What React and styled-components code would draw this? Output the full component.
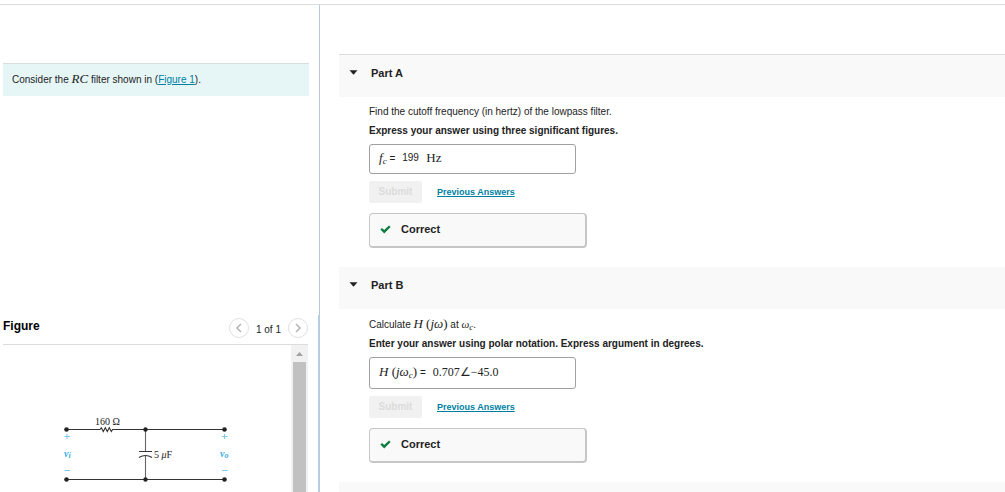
import React from "react";
import styled, { createGlobalStyle } from "styled-components";

const GlobalStyle = createGlobalStyle`
  * { box-sizing: border-box; }
  body {
    margin: 0;
    background: #fff;
    color: #222;
    font-family: "Liberation Sans", Arial, sans-serif;
    font-size: 10px;
    line-height: 16px;
  }
`;

const Page = styled.div`
  height: 100vh;
  padding-top: 4px;
  display: flex;
  flex-direction: column;
  overflow: hidden;
`;

const Columns = styled.div`
  flex: 1;
  min-height: 0;
  display: grid;
  grid-template-columns: 320px minmax(0, 1fr);
  border-top: 1px solid #dcdcdc;
`;

const Sidebar = styled.aside`
  display: flex;
  flex-direction: column;
  min-height: 0;
`;

const Introduction = styled.section`
  flex: 0 0 310px;
  padding: 58px 10px 0 3px;
  border-right: 1px solid #b9c6dc;
`;

const Prompt = styled.div`
  height: 33px;
  padding: 0 9px 2px;
  display: flex;
  align-items: center;
  border-top: 1px solid #d5dddd;
  background: #e6f6f6;
`;

const Link = styled.a`
  color: #007fa3;
  text-decoration: underline;
  font-size: ${(p) => (p.$bold ? 9 : 10)}px;
  font-weight: ${(p) => (p.$bold ? 700 : 400)};
`;

const MathText = styled.span`
  font-family: "Liberation Serif", "Times New Roman", serif;
  font-size: ${(p) => (p.$small ? 11 : 13)}px;
  line-height: 16px;
  font-style: ${(p) => (p.$upright ? "normal" : "italic")};
  white-space: nowrap;

  sub {
    font-size: 9px;
    line-height: 0;
    vertical-align: -2px;
  }
`;

const Upright = styled.span`
  font-style: normal;
`;

const FigurePane = styled.section`
  flex: 1;
  min-height: 0;
  padding: 0 10px 0 3px;
  border-right: 2px solid #b9cbe0;
  display: flex;
  flex-direction: column;
`;

const FigureHeader = styled.header`
  flex: 0 0 30px;
  display: flex;
  justify-content: space-between;
  border-bottom: 1px solid #dcdcdc;
`;

const FigureTitle = styled.h2`
  margin: 2px 0 0;
  color: #000;
  font-size: 12px;
  line-height: 18px;
`;

const Pager = styled.nav`
  padding-top: 3px;
  display: flex;
  align-items: flex-start;
  gap: 7px;
  line-height: 24px;
`;

const RoundButton = styled.button`
  width: 20px;
  height: 20px;
  padding: 0;
  display: grid;
  place-items: center;
  border: 1px solid #e0e0e0;
  border-radius: 50%;
  background: #fff;
`;

const FigureView = styled.div`
  flex: 1;
  min-height: 0;
  display: flex;
  overflow: hidden;
`;

const Drawing = styled.div`
  flex: 1;
  overflow: hidden;

  svg { display: block; }
  text { font-family: "Liberation Serif", "Times New Roman", serif; }
`;

const ScrollTrack = styled.div`
  width: 17px;
  background: #f1f1f1;
  display: flex;
  flex-direction: column;
  align-items: center;
`;

const ScrollArrow = styled.div`
  flex: 0 0 17px;
  display: grid;
  place-items: center;
`;

const ScrollThumb = styled.div`
  flex: 1;
  width: 13px;
  background: #c1c1c1;
`;

const Content = styled.main`
  padding: 49px 0 0 19px;
  overflow: hidden;
`;

const PartHeader = styled.header`
  height: ${(p) => (p.$first ? 43 : 42)}px;
  padding: 9px 10px 0;
  display: flex;
  align-items: flex-start;
  gap: 13px;
  border-top: ${(p) => (p.$first ? "1px solid #dcdcdc" : "0")};
  background: #f9f9f9;
`;

const Toggle = styled.button`
  width: 9px;
  height: 16px;
  padding: 0;
  border: 0;
  background: none;
  display: grid;
  place-items: center;
`;

const PartTitle = styled.h2`
  margin: 0;
  font-size: 11px;
  line-height: 18px;
  font-weight: 700;
`;

const PartBody = styled.form`
  padding: 7px 16px 19px 30px;
`;

const Question = styled.p`
  margin: 0 0 3px;
`;

const Instruction = styled.p`
  margin: 0 0 5px;
  font-weight: 700;
`;

const AnswerBox = styled.div`
  width: 207px;
  max-width: 100%;
  height: ${(p) => (p.$tall ? 32 : 30)}px;
  padding: 0 9px 2px;
  display: flex;
  align-items: center;
  gap: 7px;
  border: 1px solid #a0a0a0;
  border-radius: 3px;

  label { white-space: nowrap; }
`;

const AnswerInput = styled.input`
  width: ${(p) => (p.$math ? 90 : 17)}px;
  padding: 0;
  border: 0;
  outline: 0;
  background: transparent;
  color: #222;
  font-family: ${(p) => (p.$math ? '"Liberation Serif", serif' : '"Liberation Sans", sans-serif')};
  font-size: ${(p) => (p.$math ? 12 : 10)}px;
  line-height: 16px;
`;

const Actions = styled.div`
  margin: 7px 0 10px;
  display: flex;
  align-items: center;
  gap: 15px;
`;

const SubmitButton = styled.button`
  width: 53px;
  height: 22px;
  padding: 0;
  border: 0;
  border-radius: 2px;
  background: #f1f1f1;
  color: #dcdcdc;
  font: 700 10px/22px "Liberation Sans", Arial, sans-serif;
`;

const Feedback = styled.div`
  width: 218px;
  max-width: 100%;
  height: 35px;
  padding: 0 10px 2px;
  display: flex;
  align-items: center;
  gap: 10px;
  border: solid #c6c6c6;
  border-width: 1px 2px 2px 1px;
  border-radius: 4px;
  background: #f9f9f9;
  font-size: 11px;
  font-weight: 700;
`;

function Chevron({ right }) {
  return (
    <svg width="8" height="10" viewBox="0 0 8 10" aria-hidden="true">
      <path d={right ? "M2 1 6 5 2 9" : "M6 1 2 5 6 9"} fill="none" stroke="#b5b5b5" strokeWidth="1.6" />
    </svg>
  );
}

function Check() {
  return (
    <svg width="11" height="9" viewBox="0 0 11 9" aria-hidden="true">
      <path d="M0.4 4.6 2 3.1 4.2 5.1 9 0.4 10.6 1.9 4.2 8.4Z" fill="#0a7d3c" />
    </svg>
  );
}

function Circuit() {
  return (
    <svg width="280" height="160" viewBox="3 345 280 160" role="img" aria-label="RC filter circuit">
      <g fill="none" stroke="#333" strokeWidth="1.1">
        <path d="M66.5 429.5H100l1.3-1.8 2 3.8 2-3.8 2 3.8 2-3.8 2 3.8 1.4-2H224.5" />
        <path d="M66.5 479.5H224.5" />
        <path d="M145.5 429.5V451.5M145.5 455.5V479.5" stroke="#666" />
        <path d="M139 451.5H152M139 457.5Q145.5 453.5 152 457.5" />
      </g>
      <g fill="#222">
        <circle cx="66.5" cy="429.5" r="2.3" />
        <circle cx="145.5" cy="429.5" r="2.2" />
        <circle cx="224.5" cy="429.5" r="2.3" />
        <circle cx="66.5" cy="479.5" r="2.3" />
        <circle cx="145.5" cy="479.5" r="2.2" />
        <circle cx="224.5" cy="479.5" r="2.3" />
        <text x="95" y="425" fontSize="10">160 Ω</text>
        <text x="154" y="458" fontSize="10">5 <tspan fontStyle="italic">μ</tspan>F</text>
      </g>
      <path
        d="M64.5 436.5H70M67 434V439M222 436.5H227.5M224.5 434V439M64.5 470.5H70M222 470.5H227.5"
        stroke="#79c9f0"
        fill="none"
      />
      <g fill="#35aee8" fontStyle="italic" fontWeight="700" fontSize="10">
        <text x="64" y="457">v<tspan fontSize="8" dy="1">i</tspan></text>
        <text x="220" y="457">v<tspan fontSize="8" dy="1">o</tspan></text>
      </g>
    </svg>
  );
}

function Part({ first, title, question, instruction, label, id, value, math }) {
  return (
    <section>
      <PartHeader $first={first}>
        <Toggle type="button" aria-label={`Collapse ${title}`}>
          <svg width="9" height="5" viewBox="0 0 9 5" aria-hidden="true">
            <path d="M0.5 0.3H8.5L4.5 4.7Z" fill="#222" />
          </svg>
        </Toggle>
        <PartTitle>{title}</PartTitle>
      </PartHeader>
      <PartBody onSubmit={(e) => e.preventDefault()}>
        <Question>{question}</Question>
        <Instruction>{instruction}</Instruction>
        <AnswerBox $tall={math}>
          <label htmlFor={id}>{label} =</label>
          <AnswerInput id={id} $math={math} defaultValue={value} readOnly />
          {!math && <MathText $upright>Hz</MathText>}
        </AnswerBox>
        <Actions>
          <SubmitButton type="submit" disabled>Submit</SubmitButton>
          <Link href="#previous" $bold>Previous Answers</Link>
        </Actions>
        <Feedback><Check />Correct</Feedback>
      </PartBody>
    </section>
  );
}

export default function App() {
  return (
    <>
      <GlobalStyle />
      <Page>
        <Columns>
          <Sidebar>
            <Introduction>
              <Prompt>
                <span>
                  Consider the <MathText>RC</MathText> filter shown in (<Link href="#figure">Figure 1</Link>).
                </span>
              </Prompt>
            </Introduction>
            <FigurePane id="figure">
              <FigureHeader>
                <FigureTitle>Figure</FigureTitle>
                <Pager aria-label="Figures">
                  <RoundButton type="button" aria-label="Previous figure"><Chevron /></RoundButton>
                  <span>1 of 1</span>
                  <RoundButton type="button" aria-label="Next figure"><Chevron right /></RoundButton>
                </Pager>
              </FigureHeader>
              <FigureView>
                <Drawing><Circuit /></Drawing>
                <ScrollTrack>
                  <ScrollArrow>
                    <svg width="7" height="4" viewBox="0 0 7 4" aria-hidden="true">
                      <path d="M0 4 3.5 0 7 4Z" fill="#a3a3a3" />
                    </svg>
                  </ScrollArrow>
                  <ScrollThumb />
                </ScrollTrack>
              </FigureView>
            </FigurePane>
          </Sidebar>
          <Content>
            <Part
              first
              id="cutoff"
              title="Part A"
              question="Find the cutoff frequency (in hertz) of the lowpass filter."
              instruction="Express your answer using three significant figures."
              label={<MathText>f<sub>c</sub></MathText>}
              value="199"
            />
            <Part
              math
              id="transfer"
              title="Part B"
              question={
                <>
                  Calculate <MathText>H <Upright>(</Upright>jω<Upright>)</Upright></MathText> at{" "}
                  <MathText $small>ω<sub>c</sub></MathText>.
                </>
              }
              instruction="Enter your answer using polar notation. Express argument in degrees."
              label={<MathText>H <Upright>(</Upright>jω<sub>c</sub><Upright>)</Upright></MathText>}
              value="0.707∠−45.0"
            />
            <PartHeader />
          </Content>
        </Columns>
      </Page>
    </>
  );
}
